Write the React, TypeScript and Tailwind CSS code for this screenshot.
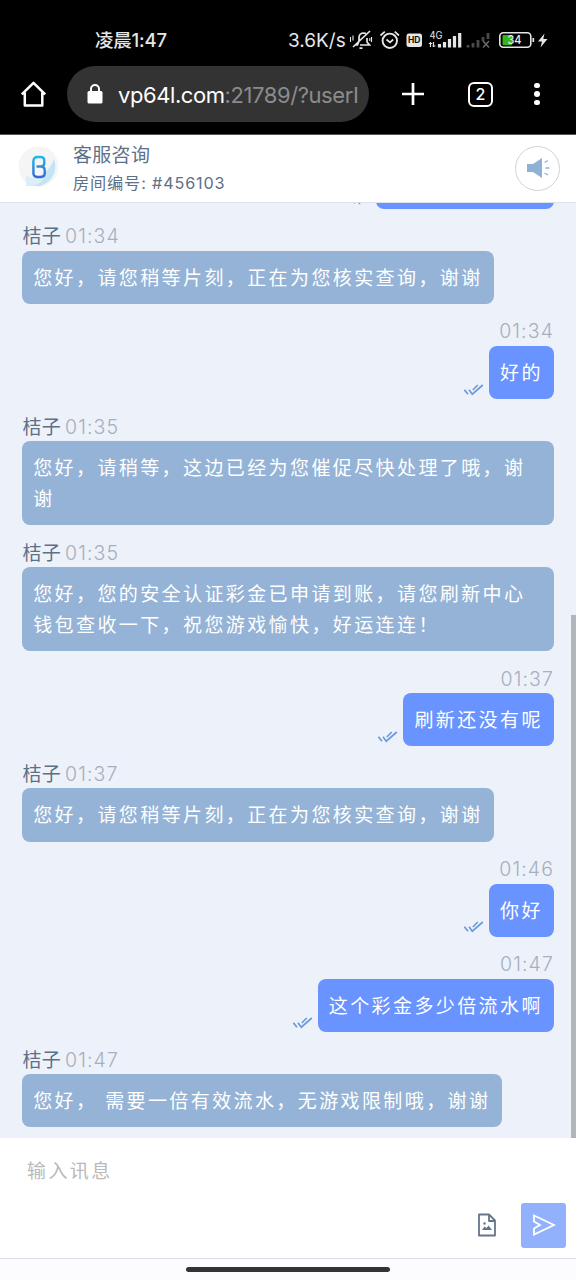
import React from 'react';

type Message = { time: string; text: string; mine?: boolean };

const messages: Message[] = [
  { time: '01:34', text: '您好，请您稍等片刻，正在为您核实查询，谢谢' },
  { time: '01:34', text: '好的', mine: true },
  { time: '01:35', text: '您好，请稍等，这边已经为您催促尽快处理了哦，谢谢' },
  { time: '01:35', text: '您好，您的安全认证彩金已申请到账，请您刷新中心钱包查收一下，祝您游戏愉快，好运连连！' },
  { time: '01:37', text: '刷新还没有呢', mine: true },
  { time: '01:37', text: '您好，请您稍等片刻，正在为您核实查询，谢谢' },
  { time: '01:46', text: '你好', mine: true },
  { time: '01:47', text: '这个彩金多少倍流水啊', mine: true },
  { time: '01:47', text: '您好， 需要一倍有效流水，无游戏限制哦，谢谢' },
];

function Ticks() {
  return (
    <svg className="mr-[5px] mb-[2.500px] h-[14px] w-5 shrink-0" viewBox="0 0 20 14" fill="none" stroke="#6c9add" strokeWidth="1.7">
      <path d="M.4 6.800 4 11.300M5 6.800l3.300 4.400L18.800 2M8.800 7 13.800 2" />
    </svg>
  );
}

function StatusBar() {
  return (
    <div className="flex h-[66px] items-start pt-[26px] pl-[95px] text-[#e6e6e6]">
      <span className="w-[193px] text-[18.5px] leading-7 font-medium tracking-[-0.2px] whitespace-nowrap">凌晨1:47</span>
      <span className="w-[61px] pt-px text-[19px] leading-7 tracking-[0px] whitespace-nowrap">3.6K/s</span>
      <svg className="mt-[1px] h-[26px] w-[220px] shrink-0" viewBox="349 27 220 26" fill="none" stroke="#e6e6e6" strokeWidth="1.7">
        <path d="M353 47 370 31M355 45h2.5l1.5-4v-3c0-3 2-5 5-5l2 .5M367 38v4l2.5 3H360M359.500 48.200h3" />
        <path d="M350.500 37v5M353 35.500v5M371.500 37v5M369.800 38v3" strokeWidth="1.1" />
        <circle cx="389.800" cy="40.800" r="7.200" strokeWidth="1.900" />
        <path d="m380.500 35.500 4.300-3.800M399 35.500l-4.300-3.800M386.500 39.500l3.500 2.800 3.200-2.800" />
        <rect x="406.500" y="33.500" width="15.500" height="13.500" rx="2.500" fill="#e6e6e6" stroke="none" />
        <text x="408" y="43.300" fill="#111" stroke="none" fontSize="8.500" fontWeight="700" textLength="12.500" lengthAdjust="spacingAndGlyphs">HD</text>
        <text x="429.500" y="38.500" fill="#e6e6e6" stroke="none" fontSize="10" textLength="13" lengthAdjust="spacingAndGlyphs">4G</text>
        <path d="M430.500 42v5M428.800 43.500h3.400M433.500 42v5M432.500 46h3" strokeWidth="1.200" />
        <path d="M439.500 44v3.500M444.500 42v5.500M449.500 39v8.500M454.500 36v11.500M459.700 33v14.500" strokeWidth="3.200" />
        <path d="M468 45v2.500M473 43v4.500M478 40v7.500M483 37v4M488 33v6" stroke="#4a4a4a" strokeWidth="2.800" />
        <path d="m483 41 6 6.500m0-6.500-6 6.500" stroke="#686868" strokeWidth="1.600" />
        <rect x="499.800" y="32.800" width="31" height="14.500" rx="3.500" strokeWidth="1.600" />
        <rect x="502.500" y="35" width="9.500" height="10.200" rx="1" fill="#35b51b" stroke="none" />
        <text x="507.500" y="44.400" fill="#eee" stroke="none" fontSize="12" fontWeight="500" textLength="14" lengthAdjust="spacingAndGlyphs">34</text>
        <path d="M533.300 38v4" />
        <path d="m544.500 33.500-6.500 8h4l-1.500 6 7-8.500h-4.200z" fill="#e6e6e6" stroke="none" />
      </svg>
    </div>
  );
}

function BrowserBar() {
  return (
    <div className="flex h-[56px] items-center text-white">
      <svg className="ml-5 h-7 w-7 shrink-0" viewBox="0 0 28 28" fill="none" stroke="currentColor" strokeWidth="2.500">
        <path d="M1.800 14.300 13.500 2.800l11.700 11.500M4.800 12.500v13h17.500v-13" strokeLinejoin="round" />
      </svg>
      <div className="ml-[19px] flex h-14 w-[302px] shrink-0 items-center rounded-full bg-[#333333] pl-5">
        <svg className="mb-px h-5 w-4 shrink-0" viewBox="0 0 16 20" fill="none">
          <rect x=".5" y="7" width="15" height="12.500" rx="1.500" fill="white" />
          <path d="M4 8V5a4 4 0 0 1 8 0v3" stroke="white" strokeWidth="2" />
        </svg>
        <span className="mt-[2px] ml-[15px] text-[22px] tracking-[-0.420px] whitespace-nowrap">
          vp64l.com<span className="text-[#8b8b8b]">:21789/?userI</span>
        </span>
      </div>
      <svg className="ml-8 h-6 w-6 shrink-0" viewBox="0 0 24 24" stroke="currentColor" strokeWidth="2.700">
        <path d="M1 12h22M12 1v22" />
      </svg>
      <div className="ml-[43px] flex h-[25px] w-[25px] shrink-0 items-center justify-center rounded-[6px] border-[2.500px] border-white text-[16px] leading-none font-medium">2</div>
      <div className="ml-[41px] flex flex-col gap-[3px]">
        <i className="size-[5.500px] rounded-full bg-white" />
        <i className="size-[5.500px] rounded-full bg-white" />
        <i className="size-[5.500px] rounded-full bg-white" />
      </div>
    </div>
  );
}

function ChatHeader() {
  return (
    <header className="flex h-[68px] shrink-0 items-center border-b border-[#dbe2ee] bg-white pr-4 pl-[18px] text-[#5c7088]">
      <svg className="mb-1 h-[42px] w-[42px] shrink-0" viewBox="0 0 42 42">
        <defs>
          <linearGradient id="logo" x1="0" y1="0" x2="0" y2="1">
            <stop stopColor="#22b9ec" />
            <stop offset="1" stopColor="#3567d5" />
          </linearGradient>
        </defs>
        <circle cx="20.500" cy="20.500" r="20" fill="#f6f5f5" />
        <path d="M36 13c5 14-5 26-16 27H8l1-8C20 33 31 27 36 13Z" fill="#c4e3f4" />
        <path d="M8 40V29c6 5 14 4 19 0-2 8-8 11-19 11Z" fill="#dceef8" />
        <path d="M18.500 20.500h4.200q4 0 4 3.800v3q0 3.700-4 3.700h-3.300q-4 0-4-4v-12q0-4 4-4h3.200q3.700 0 3.700 3.600v2.200q0 3.700-3.700 3.700" fill="none" stroke="url(#logo)" strokeWidth="2.400" />
      </svg>
      <div className="mt-[1px] ml-[13px] flex flex-1 flex-col">
        <span className="text-[19px] leading-[29px] tracking-[0.300px]">客服咨询</span>
        <span className="text-[16.200px] leading-[27px] tracking-[0.850px]">房间编号: #456103</span>
      </div>
      <div className="mb-px flex size-[45px] items-center justify-center rounded-full border border-[#d3d3d3]">
        <svg className="h-6 w-6" viewBox="0 0 24 24" fill="#8fb1d5">
          <path d="M1 8h6l9-6v20l-9-6H1z" />
          <path d="m18.500 6.500 3.500-2M19.500 12H23.500M18.500 17l3.500 2" stroke="#8fb1d5" strokeWidth="1.300" />
        </svg>
      </div>
    </header>
  );
}

function Bubble({ m }: { m: Message }) {
  return (
    <div className={m.mine ? 'flex shrink-0 flex-col items-end' : 'flex shrink-0 flex-col items-start'}>
      <div className="flex h-[30px] items-center text-[19px] leading-[30px] whitespace-nowrap text-[#a5afbd]">
        {!m.mine && <span className="w-[43px] pt-[3px] pl-[0.500px] text-[#5c7088] tracking-[0.200px]">桔子</span>}
        <span className="pt-px text-[19.500px] font-light tracking-[1.100px]">{m.time}</span>
      </div>
      <div className="flex items-end">
        {m.mine && <Ticks />}
        <p className={(m.mine ? 'bg-[#6993ff]' : 'bg-[#94b3d6]') + ' max-w-[532px] rounded-lg px-[11.200px] pt-[13px] pb-[9.500px] text-[19px] leading-[30.750px] tracking-[2.400px] text-white'}>
          {m.text}
        </p>
      </div>
    </div>
  );
}

export default function App() {
  return (
    <div
      lang="zh-CN"
      className="flex h-[1280px] w-[576px] flex-col overflow-hidden bg-white font-[Inter,'Noto_Sans_CJK_SC',sans-serif]"
    >
      <div className="h-[135px] shrink-0 border-b border-[#555] bg-black">
        <StatusBar />
        <BrowserBar />
      </div>
      <ChatHeader />
      <main className="relative flex h-[935px] shrink-0 flex-col justify-end gap-3 overflow-hidden bg-[#edf2fa] px-[22px] pb-[10.600px]">
        <div className="flex shrink-0 items-end justify-end">
          <Ticks />
          <div className="h-[53px] w-[178px] rounded-lg bg-[#6993ff]" />
        </div>
        {messages.map((m, i) => (
          <Bubble key={i} m={m} />
        ))}
        <div className="absolute right-0 bottom-0 h-[523px] w-[5px] bg-[#b1b6ba]" />
      </main>
      <footer className="flex h-[121px] shrink-0 flex-col justify-between border-b border-[#dcdfea] bg-white pt-[19px] pr-[10px] pb-[10px] pl-[27px]">
        <span className="text-[19px] leading-[30px] tracking-[2.400px] text-[#b9b9b9]">输入讯息</span>
        <div className="flex items-center justify-end">
          <svg className="mr-6 mb-px h-6 w-5" viewBox="0 0 20 24" fill="none" stroke="#64768c" strokeWidth="1.800">
            <path d="M2 1.500h10l6 6v15H2zM12 2v6h6" strokeLinejoin="round" />
            <path d="m5 17 2.500-3.500L9.500 15l2-2.500L15 17z" fill="#64768c" stroke="none" />
            <circle cx="7.500" cy="10.500" r="1.200" fill="#64768c" stroke="none" />
          </svg>
          <div className="flex size-[45px] items-center justify-center rounded-[3px] bg-[#92b1fc]">
            <svg className="mb-px h-6 w-6" viewBox="0 0 24 24" fill="none" stroke="white" strokeWidth="1.800">
              <path d="M2 2.500 22 12 2 21.500V15.500l6-3.500-6-3.500z" />
            </svg>
          </div>
        </div>
      </footer>
      <div className="flex flex-1 items-center justify-center bg-[#fcfbfe]">
        <div className="h-[5px] w-[204px] rounded-full bg-[#333234]" />
      </div>
    </div>
  );
}
